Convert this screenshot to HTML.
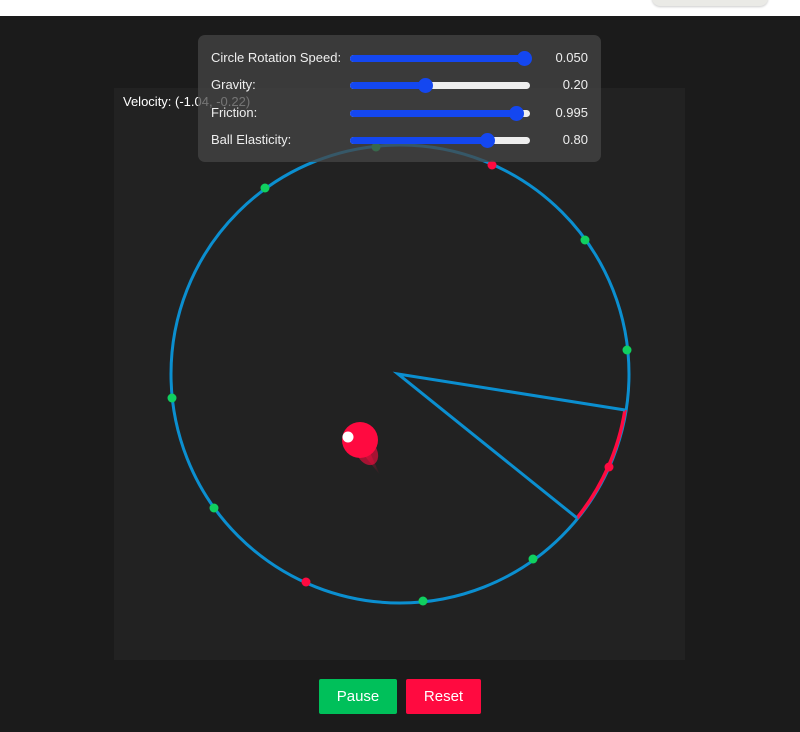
<!DOCTYPE html>
<html><head><style>
body{margin:0;width:800px;height:732px;background:#1b1b1b;font-family:"Liberation Sans",sans-serif;overflow:hidden;position:relative}
.top{position:absolute;left:0;top:0;width:800px;height:16px;background:#fff}
.pill{position:absolute;left:652px;top:-10px;width:116px;height:16px;border-radius:8px;background:#eaeae6;box-shadow:0 1px 2px #ccc}
.cv{position:absolute;left:114px;top:88px;width:571px;height:572px;background:#222}
.vel{position:absolute;left:123px;top:94px;color:#fff;font-size:13px}
.panel{position:absolute;left:198px;top:35px;width:403px;height:127px;background:rgba(70,70,70,0.75);border-radius:7px}
.row{position:absolute;left:13px;color:#eee;font-size:13px}
.val{position:absolute;right:13px;color:#eee;font-size:13px}
.tr{position:absolute;left:152px;width:180px;height:7px;border-radius:4px;background:#eee}
.fill{position:absolute;left:0;top:0;height:7px;border-radius:4px;background:#1447f0}
.th{position:absolute;top:-4px;width:15px;height:15px;border-radius:8px;background:#1447f0}
.btn{position:absolute;top:679px;height:35px;color:#fff;font-size:15px;line-height:35px;text-align:center;border-radius:2px}
</style></head><body>
<div class="top"><div class="pill"></div></div>
<div class="cv"></div>
<div class="vel">Velocity: (-1.04, -0.22)</div>
<svg style="position:absolute;left:0;top:0" width="800" height="732">
<defs><linearGradient id="g" x1="0" y1="0" x2="1" y2="1"><stop offset="0" stop-color="#ff0a40" stop-opacity="0.8"/><stop offset="1" stop-color="#ff0a40" stop-opacity="0"/></linearGradient></defs>
<circle cx="400" cy="374" r="229" fill="none" stroke="#0b8fd0" stroke-width="3"/>
<path d="M625 410 A229 229 0 0 1 577 518" fill="none" stroke="#ff0a40" stroke-width="3.5"/>
<path d="M625 410 L398 374 L577 518" fill="none" stroke="#0b8fd0" stroke-width="3"/>
<g fill="#10d060">
<circle cx="376" cy="147" r="4.5"/><circle cx="265" cy="188" r="4.5"/><circle cx="585" cy="240" r="4.5"/><circle cx="627" cy="350" r="4.5"/><circle cx="172" cy="398" r="4.5"/><circle cx="214" cy="508" r="4.5"/><circle cx="533" cy="559" r="4.5"/><circle cx="423" cy="601" r="4.5"/></g>
<g fill="#ff0a40"><circle cx="492" cy="165" r="4.5"/><circle cx="609" cy="467" r="4.5"/><circle cx="306" cy="582" r="4.5"/></g>
<path d="M352 440 L380 475 L368 448 Z" fill="url(#g)"/>
<ellipse cx="367" cy="452" rx="10" ry="14" fill="#ff0a40" opacity="0.6" transform="rotate(-30 367 452)"/>
<circle cx="360" cy="440" r="18" fill="#ff0a40"/>
<circle cx="348" cy="437" r="5.5" fill="#fff"/>
</svg>
<div class="panel">
<div class="row" style="top:15px">Circle Rotation Speed:</div><div class="tr" style="top:20px"><div class="fill" style="width:180px"></div><div class="th" style="left:167px"></div></div><div class="val" style="top:15px">0.050</div>
<div class="row" style="top:42px">Gravity:</div><div class="tr" style="top:47px"><div class="fill" style="width:78px"></div><div class="th" style="left:68px"></div></div><div class="val" style="top:42px">0.20</div>
<div class="row" style="top:70px">Friction:</div><div class="tr" style="top:75px"><div class="fill" style="width:170px"></div><div class="th" style="left:159px"></div></div><div class="val" style="top:70px">0.995</div>
<div class="row" style="top:97px">Ball Elasticity:</div><div class="tr" style="top:102px"><div class="fill" style="width:140px"></div><div class="th" style="left:130px"></div></div><div class="val" style="top:97px">0.80</div>
</div>
<div class="btn" style="left:319px;width:78px;background:#00c05a">Pause</div>
<div class="btn" style="left:406px;width:75px;background:#ff0a40">Reset</div>
</body></html>
